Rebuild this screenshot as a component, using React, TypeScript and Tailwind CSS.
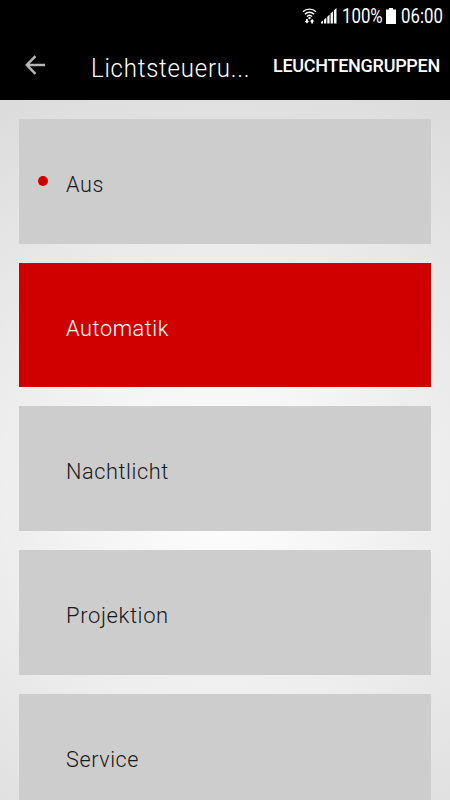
import React from 'react';

const modes = [
  { label: 'Aus', dot: true, fit: 'scale-x-[0.96]' },
  { label: 'Automatik', active: true, fit: 'scale-x-[0.965]' },
  { label: 'Nachtlicht', fit: 'scale-x-[0.965]' },
  { label: 'Projektion', fit: 'scale-x-[0.98]' },
  { label: 'Service', fit: 'scale-x-[0.96]' },
];

function WifiIcon() {
  return (
    <svg className="h-[16px] w-[15px] shrink-0" viewBox="0 0 15 16" fill="none" stroke="#fff" strokeWidth="1.4">
      <path d="M1 3.700C4.500 .2 10.500 .2 14 3.700" />
      <path d="M2.900 6.200C5.500 3.600 9.500 3.600 12.100 6.200" />
      <path d="M4.900 8.500C6.400 7 8.600 7 10.100 8.500" />
      <circle cx="7.500" cy="10" r="1.200" fill="#fff" stroke="none" />
      <path d="M4 11h1.800v1.900h1.400l-2.300 2.600-2.300-2.600H4zM9.200 15.500H11v-1.900h1.400L10.100 11l-2.300 2.600h1.400z" fill="#fff" stroke="none" />
    </svg>
  );
}

function SignalIcon() {
  return (
    <svg className="block h-[16px] w-[16px] shrink-0" viewBox="0 0 16 16" fill="#fff">
      <path d="M0 15.500V14l2-1.500v3zM3 15.500v-3.700l2.300-2.200v5.900zM6.300 15.500V8.700l2.300-2.300v9.100zM9.600 15.500V5.500l2.300-2.300v12.300zM12.900 15.500V2.300L15.500 0v15.500z" />
    </svg>
  );
}

export default function App() {
  return (
    <div className="flex h-[800px] w-[450px] flex-col overflow-hidden bg-black font-['Roboto',sans-serif]">
      <div className="flex h-8 shrink-0 items-center pl-[302px] text-white">
        <WifiIcon />
        <span className="ml-[4px]"><SignalIcon /></span>
        <span className="ml-[5px] block w-[42px] origin-left scale-x-[0.84] whitespace-nowrap text-[20px] leading-8">100%</span>
        <svg className="ml-[2px] h-[16px] w-[10px] shrink-0" viewBox="0 0 10 16" fill="#fff">
          <path d="M3 0h4v1.500h3V16H0V1.500h3z" />
        </svg>
        <span className="ml-[5px] block origin-left scale-x-[0.84] whitespace-nowrap text-[20px] leading-8">06:00</span>
      </div>
      <header className="flex h-[68px] shrink-0 items-center text-white">
        <svg className="mb-[2px] ml-[25px] h-[20px] w-[20px] shrink-0" viewBox="0 0 20 20" fill="none" stroke="#b5b5b5" strokeWidth="2.500">
          <path d="M20 10H2M10.500 1.100L1.800 10l8.700 8.900" />
        </svg>
        <h1 className="ml-[45.500px] w-[182.500px] origin-left scale-x-[0.96] whitespace-nowrap pt-[6px] text-[25px] font-light tracking-[0.8px]">Lichtsteueru...</h1>
        <span className="whitespace-nowrap pb-[1px] text-[18px] font-medium tracking-[-0.28px]">LEUCHTENGRUPPEN</span>
      </header>
      <main className="flex h-[700px] flex-col gap-[19.05px] bg-[radial-gradient(circle_450px_at_220px_390px,#ffffff,#dbdbdb)] px-[19px] pt-[18.9px]">
        {modes.map((m) => (
          <button
            key={m.label}
            className={`flex h-[124.7px] shrink-0 items-center text-left ${m.active ? 'bg-[#d00000] text-white' : 'bg-[#cdcdcd] text-[#181818]'}`}
          >
            <span className={`ml-[18.500px] size-[10px] rounded-full ${m.dot ? 'bg-[#d00000]' : ''}`} />
            <span className={`ml-[18.500px] origin-left pt-[7px] text-[22.500px] font-light tracking-[0.6px] ${m.fit}`}>{m.label}</span>
          </button>
        ))}
      </main>
    </div>
  );
}
